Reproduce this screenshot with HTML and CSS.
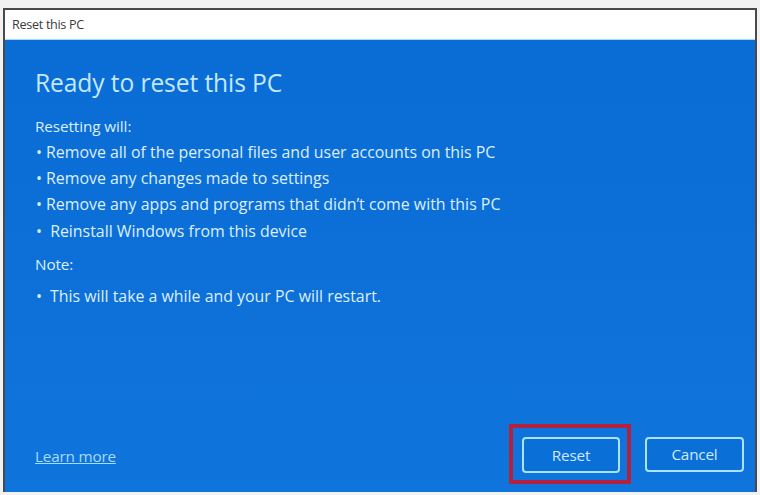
FILE: index.html
```html
<!DOCTYPE html>
<html lang="en">
<head>
<meta charset="utf-8">
<title>Reset this PC</title>
<link rel="stylesheet" href="styles.css">
</head>
<body>
<div class="window">
  <div class="titlebar">Reset this PC</div>
  <div class="body">
    <h1 class="heading">Ready to reset this PC</h1>
    <p class="line">Resetting will:</p>
    <ul class="list">
      <li><span class="dot">•</span>Remove all of the personal files and user accounts on this PC</li>
      <li><span class="dot">•</span>Remove any changes made to settings</li>
      <li><span class="dot">•</span>Remove any apps and programs that didn’t come with this PC</li>
      <li><span class="dot">•</span>&nbsp;Reinstall Windows from this device</li>
    </ul>
    <p class="line note">Note:</p>
    <ul class="list last">
      <li><span class="dot wide">•</span>This will take a while and your PC will restart.</li>
    </ul>
    <div class="footer">
      <a class="link" href="#">Learn more</a>
      <div class="buttons">
        <div class="highlight"><button class="btn">Reset</button></div>
        <button class="btn cancel">Cancel</button>
      </div>
    </div>
  </div>
</div>
</body>
</html>
```
FILE: styles.css
```css
html, body {
  margin: 0;
  padding: 0;
}
body {
  background: #f2f2f2;
  width: 760px;
  height: 495px;
  overflow: hidden;
  font-family: "Open Sans", "Noto Sans", sans-serif;
}
.window {
  margin: 8px 0 0 3px;
  width: 750px;
  height: 482px;
  border: 2px solid #4a4a4a;
  border-bottom: none;
  display: flex;
  flex-direction: column;
  background: #0b6fd8;
}
.titlebar {
  height: 30px;
  box-sizing: border-box;
  background: #ffffff;
  border-bottom: 1px solid #9fdcf6;
  font-size: 12.6px;
  letter-spacing: -0.3px;
  color: #3a3a3a;
  line-height: 29px;
  padding-left: 7px;
}
.body {
  flex: 1;
  display: flex;
  flex-direction: column;
  padding: 0 0 0 30px;
  background: linear-gradient(#0a6cd5, #0f74db);
  color: #dcefff;
}
.heading {
  margin: 27px 0 0 0;
  font-size: 24.6px;
  font-weight: 400;
  line-height: 32px;
  color: #c4e8ff;
  letter-spacing: -0.1px;
}
.line {
  margin: 14px 0 0 0;
  font-size: 15.3px;
  line-height: 26px;
  letter-spacing: -0.1px;
}
.note {
  margin-top: 7px;
}
.list {
  list-style: none;
  margin: 0;
  padding: 0 0 0 1px;
  font-size: 15.9px;
  line-height: 26px;
  letter-spacing: 0;
}
.list li:nth-child(4) {
  margin-top: 1px;
}
.list.last {
  margin-top: 6px;
}
.dot {
  display: inline-block;
  width: 10px;
}
.dot.wide {
  width: 14px;
}
.footer {
  margin-top: auto;
  margin-bottom: 8px;
  display: flex;
  align-items: center;
  justify-content: space-between;
  padding-right: 11px;
}
.link {
  color: #a6dcff;
  font-size: 15.3px;
  letter-spacing: -0.2px;
  text-decoration: underline;
  margin-top: 4px;
}
.buttons {
  display: flex;
  align-items: center;
  gap: 14px;
}
.highlight {
  border: 4px solid #b3213f;
  padding: 9px 7px 7px 9px;
}
.btn {
  width: 98px;
  height: 36px;
  background: #0b6fd8;
  border: 2px solid #a9e4ff;
  border-radius: 4px;
  color: #cfeaff;
  font-family: "Open Sans", "Noto Sans", sans-serif;
  font-size: 15.3px;
  letter-spacing: -0.2px;
  box-sizing: border-box;
  padding: 0;
}
.btn.cancel {
  width: 99px;
  height: 35px;
}
```
